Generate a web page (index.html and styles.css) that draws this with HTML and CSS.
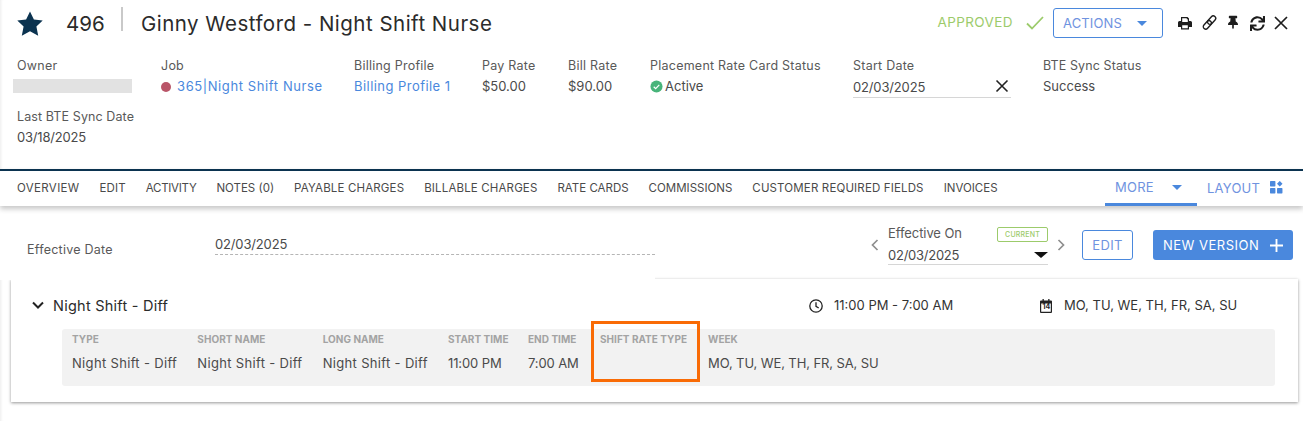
FILE: index.html
```html
<!DOCTYPE html>
<html lang="en">
<head>
<meta charset="utf-8">
<title>Ginny Westford - Night Shift Nurse</title>
<link rel="stylesheet" href="styles.css">
</head>
<body>
<div class="page">
  <header class="top">
    <div class="title-row">
      <svg class="star" viewBox="0 0 26 26"><path d="M13 .5l3.900 8 8.800.9-6.300 6.200 1.800 9.200-8.200-4.500-8.200 4.500 1.800-9.200L.3 9.400l8.800-.9z"/></svg>
      <span class="rec-id">496</span>
      <span class="rec-divider"></span>
      <h1 class="rec-title">Ginny Westford - Night Shift Nurse</h1>
      <div class="title-actions">
        <span class="approved">APPROVED</span>
        <svg class="check" viewBox="0 0 18 14"><path d="M1 7.500l5 5L17 1"/></svg>
        <button class="actions-btn">ACTIONS<span class="caret caret-blue"></span></button>
        <div class="tools">
          <svg class="tool tool-print" viewBox="0 0 14 14"><path fill-rule="evenodd" d="M3 1h6.500L11 2.500V5h1.500A1.500 1.500 0 0 1 14 6.500V11h-3v2.500H3V11H0V6.500A1.500 1.500 0 0 1 1.500 5H3zM4.200 2.200V6h5.600V3.200H8.800v-1zM4.200 9.300v3h5.600v-3z"/></svg>
          <svg class="tool tool-link" viewBox="0 0 14 14"><g transform="rotate(-48 7 7)"><rect x="-.5" y="4.700" width="9" height="4.600" rx="2.300"/><rect x="5.500" y="4.700" width="9" height="4.600" rx="2.300"/></g></svg>
          <svg class="tool tool-pin" viewBox="0 0 384 512"><path d="M298.028 214.267L285.793 96H328c13.255 0 24-10.745 24-24V24c0-13.255-10.745-24-24-24H56C42.745 0 32 10.745 32 24v48c0 13.255 10.745 24 24 24h42.207L85.972 214.267C37.465 236.82 0 277.261 0 328c0 13.255 10.745 24 24 24h136v104.007c0 1.242.289 2.467.845 3.578l24 48c2.941 5.882 11.364 5.893 14.311 0l24-48a8.008 8.008 0 0 0 .845-3.578V352h136c13.255 0 24-10.745 24-24-.001-51.183-37.983-91.42-85.973-113.733z"/></svg>
          <svg class="tool tool-sync" viewBox="0 0 512 512"><path d="M440.65 12.57l4 82.77A247.16 247.16 0 0 0 255.83 8C134.73 8 33.91 94.92 12.29 209.82A12 12 0 0 0 24.09 224h49.05a12 12 0 0 0 11.67-9.26 175.91 175.91 0 0 1 317-56.94l-101.46-4.86a12 12 0 0 0-12.57 12v47.41a12 12 0 0 0 12 12H500a12 12 0 0 0 12-12V12a12 12 0 0 0-12-12h-47.37a12 12 0 0 0-11.98 12.57zM255.83 432a175.61 175.61 0 0 1-146-77.8l101.8 4.87a12 12 0 0 0 12.57-12v-47.4a12 12 0 0 0-12-12H12a12 12 0 0 0-12 12V500a12 12 0 0 0 12 12h47.35a12 12 0 0 0 12-12.6l-4.15-82.57A247.17 247.17 0 0 0 255.83 504c121.11 0 221.93-86.92 243.55-201.82a12 12 0 0 0-11.8-14.18h-49.05a12 12 0 0 0-11.67 9.26A175.86 175.86 0 0 1 255.83 432z"/></svg>
          <svg class="tool tool-x" viewBox="0 0 14 14"><path d="M1 1l12 12M13 1L1 13"/></svg>
        </div>
      </div>
    </div>
    <div class="meta">
      <div class="field f-owner"><div class="label">Owner</div><div class="redacted"></div></div>
      <div class="field f-job"><div class="label">Job</div><div class="value"><span class="dot"></span><a class="link link-job">365|Night Shift Nurse</a></div></div>
      <div class="field f-billing"><div class="label">Billing Profile</div><div class="value"><a class="link">Billing Profile 1</a></div></div>
      <div class="field f-pay"><div class="label">Pay Rate</div><div class="value">$50.00</div></div>
      <div class="field f-bill"><div class="label">Bill Rate</div><div class="value">$90.00</div></div>
      <div class="field f-status"><div class="label">Placement Rate Card Status</div><div class="value"><svg class="ok" viewBox="0 0 14 14"><circle cx="7" cy="7" r="6.500"/><path d="M4 7.300l2.100 2L10 5.200"/></svg>Active</div></div>
      <div class="field f-start"><div class="label">Start Date</div><div class="value date-input"><span>02/03/2025</span><svg class="clear" viewBox="0 0 14 14"><path d="M1.500 1.500l11 11M12.500 1.500l-11 11"/></svg></div></div>
      <div class="field f-sync"><div class="label label-tight">BTE Sync Status</div><div class="value">Success</div></div>
      <div class="field f-last"><div class="label label-tight">Last BTE Sync Date</div><div class="value value-date">03/18/2025</div></div>
    </div>
  </header>
  <nav class="tabs">
    <a class="tab tab-wide">OVERVIEW</a>
    <a class="tab">EDIT</a>
    <a class="tab tab-narrow">ACTIVITY</a>
    <a class="tab tab-plain">NOTES (0)</a>
    <a class="tab">PAYABLE CHARGES</a>
    <a class="tab">BILLABLE CHARGES</a>
    <a class="tab tab-plain">RATE CARDS</a>
    <a class="tab tab-plain">COMMISSIONS</a>
    <a class="tab">CUSTOMER REQUIRED FIELDS</a>
    <a class="tab tab-plain">INVOICES</a>
    <div class="tabs-right">
      <a class="more">MORE<span class="caret caret-blue"></span></a>
      <a class="layout">LAYOUT
        <svg class="layout-icon" viewBox="0 0 12 12"><rect x="0" y="0" width="5" height="5" rx=".6"/><rect x="0" y="6.500" width="5" height="5" rx=".6"/><rect x="6.500" y="6.500" width="5" height="5" rx=".6"/><rect x="7.200" y="0.700" width="3.700" height="3.700" rx=".4" transform="rotate(45 9 2.500)"/></svg>
      </a>
    </div>
  </nav>
  <section class="effective">
    <div class="effective-left">
      <div class="eff-label">Effective Date</div>
      <div class="eff-value">02/03/2025</div>
    </div>
    <div class="effective-right">
      <svg class="chev" viewBox="0 0 8 12"><path d="M6.500 1L1.500 6l5 5"/></svg>
      <div class="eff-on">
        <div class="eff-on-top"><span>Effective On</span><span class="badge">CURRENT</span></div>
        <div class="eff-select"><span>02/03/2025</span><span class="caret caret-black"></span></div>
      </div>
      <svg class="chev" viewBox="0 0 8 12"><path d="M1.500 1l5 5-5 5"/></svg>
      <button class="edit-btn">EDIT</button>
      <button class="new-btn">NEW VERSION<svg class="plus" viewBox="0 0 14 14"><path d="M7 0v14M0 7h14"/></svg></button>
    </div>
  </section>
  <section class="card">
    <div class="card-head">
      <svg class="chev-down" viewBox="0 0 12 8"><path d="M1 1.500l5 5 5-5"/></svg>
      <span class="card-title">Night Shift - Diff</span>
      <span class="head-time">
        <svg class="clock" viewBox="0 0 14 14"><circle cx="7" cy="7" r="6.200"/><path d="M7 3.200V7.300l2.700 1.700"/></svg>
        11:00 PM - 7:00 AM
      </span>
      <span class="head-days">
        <svg class="cal" viewBox="0 0 12 14"><path d="M2.500 0h1.300v1.500h4.400V0h1.300v1.500H11a1 1 0 0 1 1 1V13a1 1 0 0 1-1 1H1a1 1 0 0 1-1-1V2.500a1 1 0 0 1 1-1h1.500zM1.200 4.500V12.800h9.600V4.500z"/></svg>
        <span class="cal-num">14</span>
        MO, TU, WE, TH, FR, SA, SU
      </span>
    </div>
    <div class="detail">
      <div class="col c-type"><div class="col-h">TYPE</div><div class="col-v">Night Shift - Diff</div></div>
      <div class="col c-short"><div class="col-h">SHORT NAME</div><div class="col-v">Night Shift - Diff</div></div>
      <div class="col c-long"><div class="col-h">LONG NAME</div><div class="col-v">Night Shift - Diff</div></div>
      <div class="col c-start"><div class="col-h">START TIME</div><div class="col-v">11:00 PM</div></div>
      <div class="col c-end"><div class="col-h">END TIME</div><div class="col-v">7:00 AM</div></div>
      <div class="col c-rate"><div class="col-h">SHIFT RATE TYPE</div><div class="col-v"></div><div class="highlight"></div></div>
      <div class="col c-week"><div class="col-h">WEEK</div><div class="col-v">MO, TU, WE, TH, FR, SA, SU</div></div>
    </div>
  </section>
</div>
</body>
</html>
```
FILE: styles.css
```css
* { box-sizing: border-box; }
html, body { margin: 0; padding: 0; }
body {
  width: 1303px;
  height: 421px;
  overflow: hidden;
  background: #fff;
  font-family: Inter, "Open Sans", "Liberation Sans", sans-serif;
  font-size: 13px;
  color: #4a4a4a;
}
.page { position: relative; height: 421px; box-shadow: inset 3px 0 3px -2px #ececec; }
.top { height: 169px; padding: 0 0 0 17px; }
.title-row { display: flex; align-items: center; height: 46px; }
.star { width: 26px; height: 26px; fill: #0b3350; margin-top: 1px; flex: none; }
.rec-id { margin-left: 23px; font-size: 20.500px; color: #2b2b2b; width: 42px; }
.rec-divider { width: 2px; height: 24px; background: #c9c9c9; margin: -8px 0 0 13px; }
.rec-title { margin: 0 0 0 18px; font-size: 20.500px; font-weight: 400; color: #2b2b2b; letter-spacing: .48px; }
.title-actions { margin-left: auto; display: flex; align-items: center; padding-right: 15px; }
.approved { color: #9ccb6b; font-size: 13.500px; letter-spacing: .4px; margin-top: -2px; }
.check { width: 18px; height: 14px; margin-left: 13px; fill: none; stroke: #9ccb6b; stroke-width: 1.800; }
.actions-btn {
  display: flex; align-items: center; justify-content: space-between;
  width: 110px; height: 30px; margin-left: 9px; padding: 0 15px 0 9px;
  border: 1px solid #4a88dd; border-radius: 3px; background: #fff;
  color: #6f93e0; font: inherit; font-size: 13px; letter-spacing: .15px;
}
.caret { display: inline-block; width: 0; height: 0; border-left: 5px solid transparent; border-right: 5px solid transparent; }
.caret-blue { border-top: 5px solid #4a88dd; }
.caret-black { border-left-width: 7px; border-right-width: 7px; border-top: 6px solid #111; }
.tools { display: flex; align-items: center; margin-left: 15px; }
.tool { display: block; fill: #1d1d1d; flex: none; }
.tool-print { width: 14px; height: 14px; }
.tool-link { width: 15px; height: 15px; fill: none; stroke: #1d1d1d; stroke-width: 1.300; margin: -1px 0 0 10px; }
.tool-pin { width: 10px; height: 15px; margin: -2px 0 0 11px; }
.tool-sync { width: 15px; height: 15px; margin-left: 12px; }
.tool-x { width: 14px; height: 14px; fill: none; stroke: #1d1d1d; stroke-width: 1.700; margin-left: 9px; }
.meta { display: flex; flex-wrap: wrap; row-gap: 10px; padding-top: 11px; }
.field { height: 41px; flex: none; }
.label { font-size: 12.500px; line-height: 17px; color: #595959; letter-spacing: .24px; }
.label-tight { letter-spacing: .1px; }
.value { font-size: 13px; line-height: 17px; margin-top: 4px; color: #4a4a4a; display: flex; align-items: center; }
.value-date { letter-spacing: -.2px; }
.link { color: #4a88dd; letter-spacing: .45px; white-space: pre; }
.link-job { letter-spacing: .6px; }
.f-owner { width: 144px; }
.f-job { width: 193px; }
.f-billing { width: 128px; }
.f-pay { width: 86px; }
.f-bill { width: 82px; }
.f-status { width: 203px; }
.f-start { width: 190px; }
.f-sync { width: 200px; }
.f-last { width: 300px; }
.redacted { width: 119px; height: 14px; margin: 5px 0 0 -4px; background: #e2e2e2; }
.dot { width: 10px; height: 10px; border-radius: 50%; background: #b95568; margin-right: 6px; flex: none; }
.ok { width: 13px; height: 13px; margin-right: 2px; }
.ok circle { fill: #48b47a; }
.ok path { fill: none; stroke: #fff; stroke-width: 1.300; }
.date-input { width: 158px; height: 21px; margin-top: 3px; justify-content: space-between; border-bottom: 1px solid #d6d6d6; padding: 0 2px 0 0; letter-spacing: -.15px; }
.clear { width: 14px; height: 14px; fill: none; stroke: #222; stroke-width: 1.600; margin-top: -2px; }
.tabs {
  position: relative; z-index: 2; display: flex; align-items: stretch; gap: 20px;
  height: 37px; padding: 0 0 0 17px;
  border-top: 2px solid #0b3350; background: #fff;
  box-shadow: 0 3px 5px rgba(0,0,0,.22);
  font-size: 11.500px;
}
.tab { display: flex; align-items: center; color: #4a4a4a; height: 33px; letter-spacing: .15px; }
.tab-wide { letter-spacing: .35px; }
.tab-narrow { letter-spacing: -.3px; }
.tab-plain { letter-spacing: 0; }
.tabs-right { margin-left: auto; display: flex; align-items: stretch; padding-right: 20px; font-size: 13px; color: #6f93e0; }
.more { display: flex; align-items: center; justify-content: space-between; width: 92px; height: 35px; padding: 0 15px 0 10px; border-bottom: 3px solid #4a88dd; letter-spacing: .2px; }
.layout { display: flex; align-items: center; margin-left: 10px; height: 33px; letter-spacing: .2px; }
.layout-icon { width: 13px; height: 13px; fill: #4a88dd; margin-left: 10px; }
.effective { display: flex; justify-content: space-between; height: 73px; padding: 0 10px 0 0; }
.effective-left { position: relative; z-index: 1; display: flex; flex: none; align-self: flex-start; width: 655px; height: 74px; padding-left: 27px; background: #fff; }
.eff-label { flex: none; width: 188px; margin-top: 35px; font-size: 12.500px; line-height: 17px; color: #595959; letter-spacing: .25px; }
.eff-value { flex: none; width: 440px; height: 23px; margin-top: 26px; padding-top: 3px; border-bottom: 1px dashed #b5b5b5; font-size: 13px; line-height: 18px; letter-spacing: -.15px; }
.effective-right { display: flex; align-items: flex-start; padding-top: 18px; }
.chev { width: 8px; height: 12px; margin-top: 15px; fill: none; stroke: #8e8e8e; stroke-width: 1.700; }
.eff-on { width: 160px; margin: 1px 9px 0; }
.eff-on-top { display: flex; justify-content: space-between; font-size: 13px; line-height: 17px; color: #595959; letter-spacing: -.08px; }
.badge { width: 51px; height: 15px; margin-top: 2px; border: 1px solid #9ccb6b; border-radius: 2px; color: #9ccb6b; font-size: 7px; font-weight: 500; line-height: 13px; text-align: center; letter-spacing: .2px; }
.eff-select { display: flex; align-items: center; justify-content: space-between; height: 20px; margin-top: 3px; border-bottom: 1px solid #d6d6d6; font-size: 13px; letter-spacing: -.25px; }
.eff-select .caret { margin-right: 0; }
.edit-btn { width: 51px; height: 30px; margin: 6px 0 0 17px; border: 1px solid #4a88dd; border-radius: 3px; background: #fff; color: #6f93e0; font: inherit; font-size: 13px; letter-spacing: .3px; }
.new-btn { display: flex; align-items: center; justify-content: space-between; width: 140px; height: 30px; margin: 6px 0 0 20px; padding: 0 10px 0 10px; border: 0; border-radius: 3px; background: #4a88dd; color: #fff; font: inherit; font-size: 13px; letter-spacing: .5px; }
.plus { width: 13px; height: 13px; fill: none; stroke: #fff; stroke-width: 2; }
.card { margin: 0 5px 0 11px; height: 123px; background: #fff; box-shadow: 0 1px 3px rgba(0,0,0,.42); }
.card-head { display: flex; align-items: center; height: 50px; padding: 2px 0 0 21px; color: #333; }
.chev-down { width: 12px; height: 8px; fill: none; stroke: #222; stroke-width: 2; }
.card-title { width: 756px; margin-left: 9px; font-size: 14.500px; color: #2b2b2b; letter-spacing: .25px; }
.head-time { display: flex; align-items: center; gap: 11px; width: 231px; font-size: 13px; }
.clock { width: 14px; height: 14px; fill: none; stroke: #222; stroke-width: 1.300; margin-top: 1px; }
.head-days { position: relative; display: flex; align-items: center; font-size: 13px; }
.cal { width: 12px; height: 14px; fill: #222; margin-right: 12px; margin-top: 1px; }
.cal-num { position: absolute; left: 2.500px; top: 5.500px; font-size: 7px; line-height: 8px; font-weight: 700; color: #222; }
.detail { display: flex; height: 57px; margin: 0 23px 0 51px; padding-left: 10px; background: #f2f2f2; border-radius: 3px; }
.col { flex: none; padding-top: 4px; }
.col-h { font-size: 10px; line-height: 12px; font-weight: 700; color: #a3a3a3; white-space: nowrap; letter-spacing: .03px; }
.col-v { font-size: 13px; line-height: 17px; margin-top: 10px; color: #4a4a4a; white-space: nowrap; letter-spacing: .33px; }
.c-type, .c-short, .c-long { width: 125.330px; }
.c-start { width: 80px; }
.c-end { width: 72px; }
.c-start .col-v, .c-end .col-v { letter-spacing: -.1px; }
.c-rate { position: relative; width: 108px; }
.c-week { flex: 1; }
.c-week .col-v { letter-spacing: -.1px; }
.highlight { position: absolute; left: -9px; top: -8px; width: 109px; height: 61px; border: 3px solid #f96b06; }
```
